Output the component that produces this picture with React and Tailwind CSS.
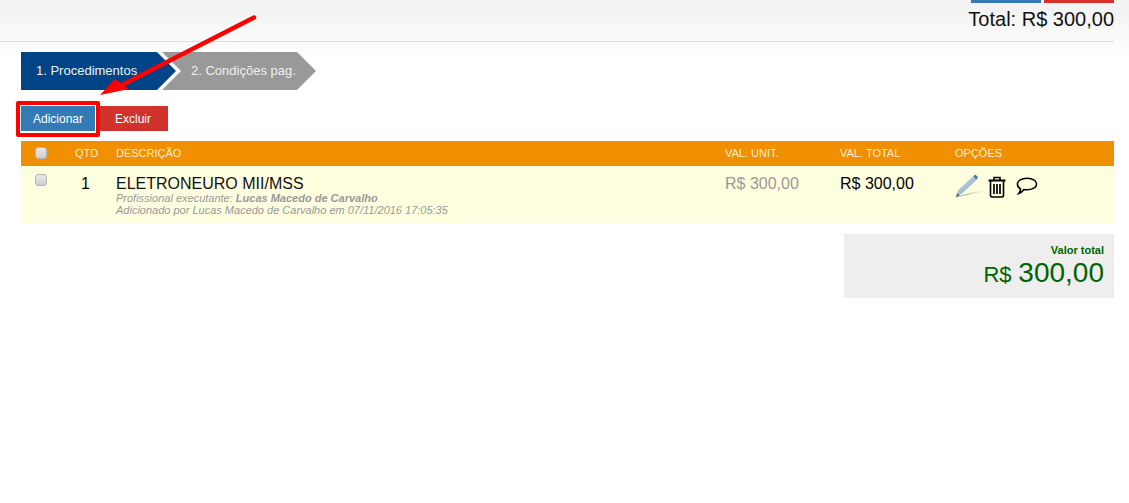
import React from 'react';

const FakeCheckbox = () => (
    <span className="block w-3 h-3 rounded-[3px] border border-[#b5b5b5] bg-[linear-gradient(#e8e8e8,#cfcfcf)]" />
);

const PencilIcon = () => (
    <svg width="32" height="26" viewBox="0 0 32 26">
        <defs>
            <linearGradient id="pencilBody" x1="0" y1="0" x2="1" y2="1">
                <stop offset="0" stopColor="#d5e6f2" />
                <stop offset="1" stopColor="#6f9fc4" />
            </linearGradient>
            <linearGradient id="pencilShadow" x1="0" y1="1" x2="1" y2="0">
                <stop offset="0" stopColor="#a8a89e" />
                <stop offset="1" stopColor="#ffffe0" />
            </linearGradient>
        </defs>
        <path d="M1 23 C10 20 20 17 32 16 C22 19 10 22 1 23.5 Z" fill="url(#pencilShadow)" />
        <path d="M1 23 L3.5 16.5 L18.5 2.5 L21.5 5.5 L6.5 19.5 Z" fill="url(#pencilBody)" stroke="#7fa0b8" strokeWidth="0.5" />
        <path d="M18.5 2.5 L20 0.5 L23 3 L21.5 5.5 Z" fill="#4a7396" />
        <path d="M1 23 L2.4 19.2 L4.8 21.4 Z" fill="#5a6168" />
    </svg>
);

const TrashIcon = () => (
    <svg width="18" height="22" viewBox="0 0 18 22" fill="none" stroke="#000" strokeWidth="1.6">
        <path d="M0.5 4.5 H17.5" strokeWidth="2" />
        <path d="M6 4 V1.5 H12 V4" />
        <path d="M2.5 5 V19.5 Q2.5 21 4 21 H14 Q15.5 21 15.5 19.5 V5" />
        <path d="M6 8 V18 M9 8 V18 M12 8 V18" strokeWidth="1.7" />
    </svg>
);

const CommentIcon = () => (
    <svg width="22" height="18" viewBox="0 0 22 18" fill="none" stroke="#000" strokeWidth="1.6">
        <path d="M11 1.2 C16.5 1.2 20.6 3.6 20.6 7 C20.6 10.4 16.5 12.8 11 12.8 C10 12.8 9 12.7 8 12.5 C6.8 14.2 5 15.6 2.8 16.4 C3.9 15 4.5 13.5 4.5 12 C2.5 10.9 1.4 9.1 1.4 7 C1.4 3.6 5.5 1.2 11 1.2 Z" />
    </svg>
);

const Annotation = () => (
    <>
        {/* red box round the Adicionar button */}
        <div className="absolute z-20 left-[16px] top-[101px] w-[84px] h-[36px] border-4 border-[#ff0000] rounded-[2px]" />
        {/* arrow */}
        <svg className="absolute z-20 left-0 top-0" width="300" height="110" viewBox="0 0 300 110">
            <path d="M254 17.5 L122 85" stroke="#ff0000" strokeWidth="4.5" strokeLinecap="round" fill="none" />
            <path d="M100 95 L115 79 L129 89 Z" fill="#ff0000" />
        </svg>
    </>
);

export default function App() {
    return (
        <div className="relative min-h-[503px] bg-white font-['Liberation_Sans',Arial,sans-serif] text-black">
            {/* Top summary band */}
            <div className="h-[60px] bg-[linear-gradient(#f1f1f1,#ffffff)] pr-[15px]">
                <div className="h-[42px] border-b border-[#dcdcdc] flex flex-col items-end">
                    <div className="flex gap-[3px]">
                        <div className="w-[70px] h-[3px] bg-[#337ab7]" />
                        <div className="w-[70px] h-[3px] bg-[#d9302c]" />
                    </div>
                    <div className="text-[20px] leading-[22px] mt-[5px] text-[#111]">Total: R$ 300,00</div>
                </div>
            </div>

            <div className="px-[21px] pr-[15px] -mt-[8px]">
                {/* Steps */}
                <div className="flex h-[38px] text-[13px] text-[#f0f0f0]">
                    <div className="relative z-10 w-[156px] pl-[15px] flex items-center bg-[#004488] [clip-path:polygon(0_0,136px_0,155px_19px,136px_38px,0_38px)]">
                        1. Procedimentos
                    </div>
                    <div className="-ml-[15px] w-[154px] pl-[29px] flex items-center bg-[#999999] [clip-path:polygon(0_0,135px_0,154px_19px,135px_38px,0_38px,19px_19px)]">
                        2. Condições pag.
                    </div>
                </div>

                {/* Actions */}
                <div className="flex gap-[5px] mt-[16px] h-[25px] text-[12px] text-white">
                    <button className="w-[74px] bg-[#337ab7]">Adicionar</button>
                    <button className="w-[68px] pr-[2px] bg-[#d2322d]">Excluir</button>
                </div>

                {/* Table */}
                <div className="mt-[10px]">
                    <div className="flex items-center h-[25px] bg-[#f09000] text-[11px] text-[#fdecd2]">
                        <div className="w-[54px] pl-[14px] -mt-px"><FakeCheckbox /></div>
                        <div className="w-[23px] text-right">QTD</div>
                        <div className="w-[609px] ml-[18px]">DESCRIÇÃO</div>
                        <div className="w-[115px]">VAL. UNIT.</div>
                        <div className="w-[115px]">VAL. TOTAL</div>
                        <div>OPÇÕES</div>
                    </div>
                    <div className="flex h-[57px] bg-[#ffffe0] pt-[8px]">
                        <div className="w-[54px] pl-[14px]"><FakeCheckbox /></div>
                        <div className="w-[23px] pr-[8px] pt-px text-right text-[16px] leading-[18px]">1</div>
                        <div className="w-[609px] ml-[18px] pt-px">
                            <div className="text-[16px] leading-[18px] text-[#111]">ELETRONEURO MII/MSS</div>
                            <div className="-mt-px text-[11px] leading-[12px] italic text-[#999]">
                                Profissional executante: <b>Lucas Macedo de Carvalho</b>
                            </div>
                            <div className="text-[11px] leading-[12px] italic text-[#999]">
                                Adicionado por Lucas Macedo de Carvalho em 07/11/2016 17:05:35
                            </div>
                        </div>
                        <div className="w-[115px] pt-px text-[16px] leading-[18px] text-[#999]">R$ 300,00</div>
                        <div className="w-[115px] pt-px text-[16px] leading-[18px]">R$ 300,00</div>
                        <div className="relative flex items-start">
                            <PencilIcon />
                            <div className="ml-[1px] mt-[2px]"><TrashIcon /></div>
                            <div className="ml-[10px] mt-[3px]"><CommentIcon /></div>
                        </div>
                    </div>
                </div>

                {/* Total */}
                <div className="flex justify-end mt-[11px]">
                    <div className="w-[270px] h-[64px] bg-[#eeeeee] pr-[10px] pt-[10px] text-right text-[#006400]">
                        <div className="text-[11px] leading-[13px] font-bold">Valor total</div>
                        <div className="text-[28px] leading-[32px]">
                            <span className="text-[22px] -mr-px">R$</span> 300,00
                        </div>
                    </div>
                </div>
            </div>

            <Annotation />
        </div>
    );
}
